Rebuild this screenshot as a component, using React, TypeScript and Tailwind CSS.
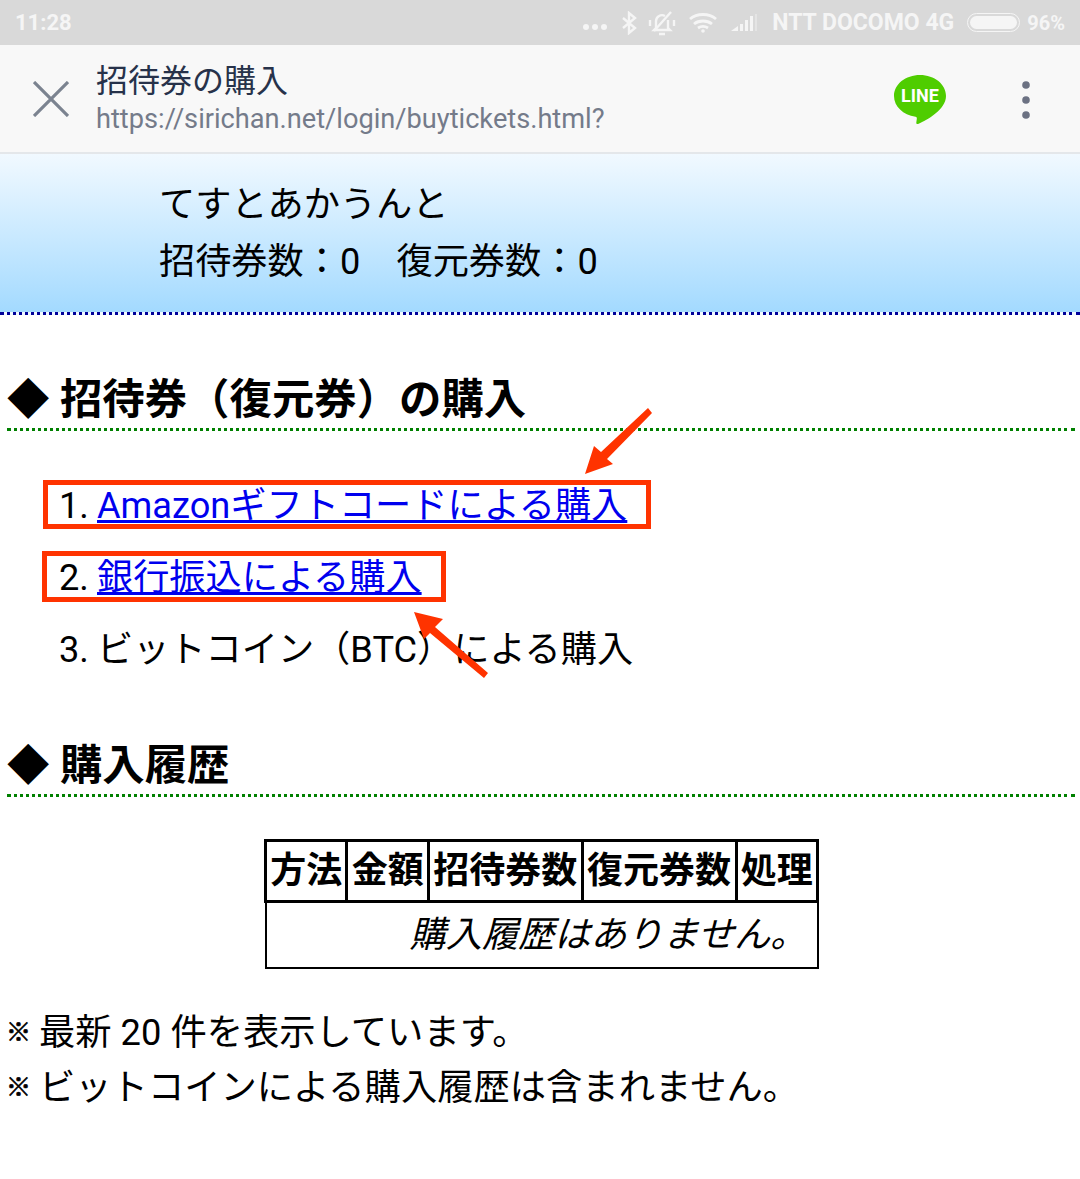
const jp = '[font-family:Roboto,"Noto_Sans_CJK_JP",sans-serif]';

const purchases = [
  { num: '1.', label: 'Amazonギフトコードによる購入', href: '#' },
  { num: '2.', label: '銀行振込による購入', href: '#' },
  { num: '3.', label: 'ビットコイン（BTC）による購入' },
];

const columns = ['方法', '金額', '招待券数', '復元券数', '処理'];

const notes = ['最新 20 件を表示しています。', 'ビットコインによる購入履歴は含まれません。'];

function StatusBar() {
  return (
    <div className="h-[45px] bg-[#d9d9d9] flex items-center justify-between px-[15px] text-[#f5f5f5] font-bold font-['Roboto']">
      <span className="text-[22px] leading-none">11:28</span>
      <div className="flex items-center">
        <svg width="26" height="8" viewBox="0 0 26 8" className="mt-[9px]" fill="#f5f5f5">
          <circle cx="4" cy="4" r="3" />
          <circle cx="13" cy="4" r="3" />
          <circle cx="22" cy="4" r="3" />
        </svg>
        <svg width="16" height="24" viewBox="0 0 16 24" className="ml-[13px]" fill="none" stroke="#f5f5f5" strokeWidth="2.4">
          <path d="M2 7l12 10-6 5V2l6 5L2 17" />
        </svg>
        <svg width="28" height="28" viewBox="0 0 28 28" className="ml-[11px]" fill="none" stroke="#f5f5f5" strokeWidth="2.4">
          <path d="M8 19V12a6 6 0 0 1 9-5M20 11v8l2 2H6l2-2M11 25h6" />
          <path d="M6 22L23 3" />
          <path d="M2 11v6M26 11v6" />
        </svg>
        <svg width="30" height="22" viewBox="0 0 30 22" className="ml-[12px]" fill="none" stroke="#f5f5f5" strokeWidth="2.8">
          <path d="M2 7c7-6 19-6 26 0M6 12c5-4 13-4 18 0M10 16c3-2 7-2 10 0" />
          <circle cx="15" cy="19" r="1.8" fill="#f5f5f5" stroke="none" />
        </svg>
        <svg width="28" height="20" viewBox="0 0 28 20" className="ml-[13px]" fill="#f5f5f5">
          <path d="M0 18l7-5v5z" />
          <path d="M9 11h3v7H9zM14 7h3v11h-3zM19 3h3v15h-3z" />
          <path d="M24 1h2v17h-2z" opacity="0.4" />
        </svg>
        <span className="ml-[13px] text-[23px] leading-none">NTT DOCOMO 4G</span>
        <div className="ml-[13px] w-[53px] h-[19px] rounded-full border border-[#f5f5f5] p-[2px]">
          <div className="w-full h-full rounded-full bg-[#f5f5f5]" />
        </div>
        <span className="ml-[7px] text-[20px] leading-none">96%</span>
      </div>
    </div>
  );
}

function Toolbar() {
  return (
    <div className="h-[109px] bg-[#f8f8f8] border-b-2 border-[#e4e7ea] flex items-center">
      <svg width="36" height="36" viewBox="0 0 36 36" className="ml-[33px]" fill="none" stroke="#7b8390" strokeWidth="3.2">
        <path d="M1 1l34 34M35 1L1 35" />
      </svg>
      <div className="ml-[27px] flex-1 -mt-[1px]">
        <div className={`text-[32px] leading-[40px] text-[#27324a] ${jp}`}>招待券の購入</div>
        <div className="text-[27.2px] leading-[34px] mt-[1px] text-[#747b8a] font-['Roboto']">https://sirichan.net/login/buytickets.html?</div>
      </div>
      <svg width="54" height="52" viewBox="0 0 54 52" className="mr-[74px] mt-[3px]">
        <path d="M27 1C12.6 1 1 10.300 1 22c0 10.400 9.200 19 21.500 20.700 1.200.3 1.500 1 1.300 2.300l-.5 3.500c-.2 1.300 1 2 2.300 1.300C34 46 53 35.500 53 22 53 10.300 41.400 1 27 1z" fill="#4fcd00" />
        <text x="27" y="28" textAnchor="middle" fontSize="18" fontWeight="700" fill="#fff" fontFamily="Roboto, sans-serif">LINE</text>
      </svg>
      <svg width="10" height="40" viewBox="0 0 10 40" className="mr-[49px] mt-[2px]" fill="#6c7283">
        <circle cx="5" cy="5" r="3.800" />
        <circle cx="5" cy="20" r="3.800" />
        <circle cx="5" cy="35" r="3.800" />
      </svg>
    </div>
  );
}

function SectionTitle({ children }: { children: string }) {
  return (
    <h2 className="ml-[7px] mr-[5px] border-b-[3px] border-dotted border-[#008000] h-[57px] flex items-center text-[42.4px] leading-none font-bold text-black">
      <span className="-mt-[2px]">◆ {children}</span>
    </h2>
  );
}

export default function App() {
  return (
    <div className={`relative w-[1080px] h-[1179px] bg-white overflow-hidden text-black ${jp}`}>
      <StatusBar />
      <Toolbar />

      <div className="h-[161px] border-b-[3px] border-dotted border-[#000099] bg-gradient-to-b from-[#f1f9ff] to-[#a3daff] pl-[159px] pt-[22px] text-[36.2px] leading-[57px]">
        <div>てすとあかうんと</div>
        <div className="whitespace-pre">招待券数：0　復元券数：0</div>
      </div>

      <div className="pt-[59px]">
        <SectionTitle>招待券（復元券）の購入</SectionTitle>

        <div className="mt-[39px] pl-[59px] text-[36.2px]">
          {purchases.map((p) => (
            <div key={p.num} className="h-[72px] flex items-center">
              <span className="w-[38px]">{p.num}</span>
              {p.href ? (
                <a href={p.href} className="text-[#0000ee] underline">{p.label}</a>
              ) : (
                <span>{p.label}</span>
              )}
            </div>
          ))}
        </div>

        <div className="mt-[54px]">
          <SectionTitle>購入履歴</SectionTitle>
        </div>

        <div className="mt-[42px] ml-[264px]">
          <table className="w-[555px] border-collapse border-2 border-black text-[36px]">
            <thead>
              <tr className="h-[61px]">
                {columns.map((c) => (
                  <th key={c} className="border-[3px] border-black px-[3px] font-bold whitespace-nowrap">{c}</th>
                ))}
              </tr>
            </thead>
            <tbody>
              <tr className="h-[66px]">
                <td colSpan={5} className="border-2 border-black text-right pr-[10px] text-[36.2px] italic">購入履歴はありません。</td>
              </tr>
            </tbody>
          </table>
        </div>

        <div className="mt-[36px] pl-[6px] text-[36.3px] leading-[55px]">
          {notes.map((n) => (
            <div key={n} className="flex items-center">
              <span className="w-[33px] text-[25px] font-bold [-webkit-text-stroke:0.7px_black]">※</span>
              <span>{n}</span>
            </div>
          ))}
        </div>
      </div>

      {/* red annotations drawn over the page */}
      <div className="absolute left-[43px] top-[480px] w-[608px] h-[49px] border-[5px] border-[#ff3300]" />
      <div className="absolute left-[42px] top-[551px] w-[404px] h-[51px] border-[5px] border-[#ff3300]" />
      <svg className="absolute left-0 top-0" width="1080" height="1179" fill="#ff3300" stroke="none">
        <path d="M648 408l4 5-45 46 6 5-28 10 9-28 7 6z" />
        <path d="M414 612l29 7-8 8 53 46-4 5-54-45-6 6z" />
      </svg>
    </div>
  );
}
